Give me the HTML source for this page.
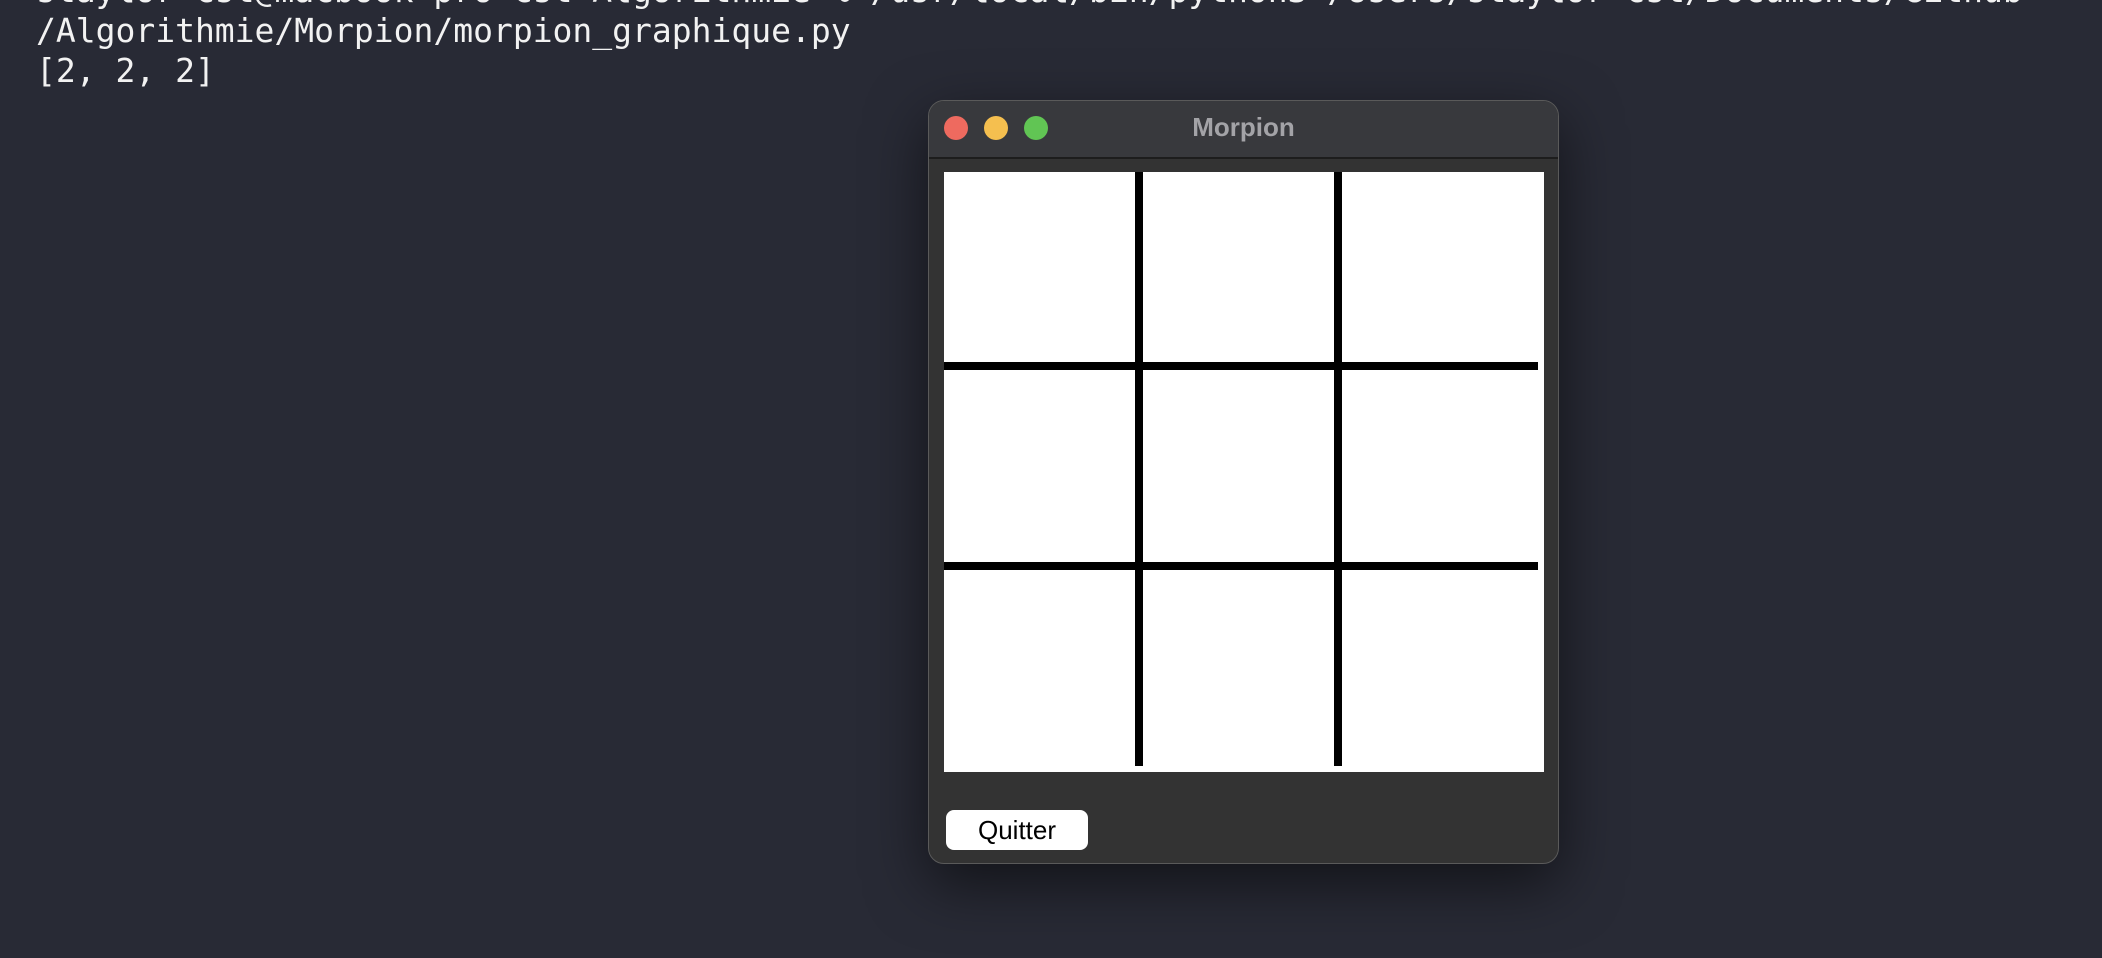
<!DOCTYPE html>
<html><head><meta charset="utf-8"><style>
html,body{margin:0;padding:0;width:2102px;height:958px;overflow:hidden;background:#282a35;position:relative}
.t{position:absolute;left:36px;font-family:"DejaVu Sans Mono","Liberation Mono",monospace;font-size:33px;color:#f2f2f2;white-space:pre;line-height:40px}
.win{position:absolute;left:928px;top:100px;width:631px;height:764px;background:#333333;border-radius:16px;border:1px solid #5a5a5a;box-sizing:border-box;box-shadow:0 20px 60px rgba(0,0,0,.55);overflow:hidden}
.tb{position:absolute;left:0;top:0;right:0;height:56px;background:#38393d;border-bottom:2px solid #1d1d1d}
.dot{position:absolute;top:15px;width:24px;height:24px;border-radius:50%}
.title{position:absolute;left:0;right:0;top:11px;text-align:center;font-family:"Liberation Sans",sans-serif;font-weight:bold;font-size:26px;color:#a3a3a7}
.c{position:absolute;left:944px;top:172px;width:600px;height:600px;background:#fff}
.l{position:absolute;background:#000}
.btn{position:absolute;left:946px;top:810px;width:142px;height:40px;background:#fff;border-radius:8px;font-family:"Liberation Sans",sans-serif;font-size:26px;line-height:40px;text-align:center;color:#000}
</style></head><body>
<div class="t" style="top:-29px">staylor-cst@macbook-pro-cst Algorithmie % /usr/local/bin/python3 /Users/staylor-cst/Documents/Github</div>
<div class="t" style="top:11px">/Algorithmie/Morpion/morpion_graphique.py</div>
<div class="t" style="top:51px">[2, 2, 2]</div>
<div class="win">
<div class="tb">
<div class="dot" style="left:15px;background:#ee6a5f"></div>
<div class="dot" style="left:55px;background:#f5bf4f"></div>
<div class="dot" style="left:95px;background:#61c554"></div>
<div class="title">Morpion</div>
</div>
</div>
<div class="c"></div>
<div class="l" style="left:1135px;top:172px;width:8px;height:594px"></div>
<div class="l" style="left:1334px;top:172px;width:8px;height:594px"></div>
<div class="l" style="left:944px;top:362px;width:594px;height:8px"></div>
<div class="l" style="left:944px;top:562px;width:594px;height:8px"></div>
<div class="btn">Quitter</div>
</body></html>
